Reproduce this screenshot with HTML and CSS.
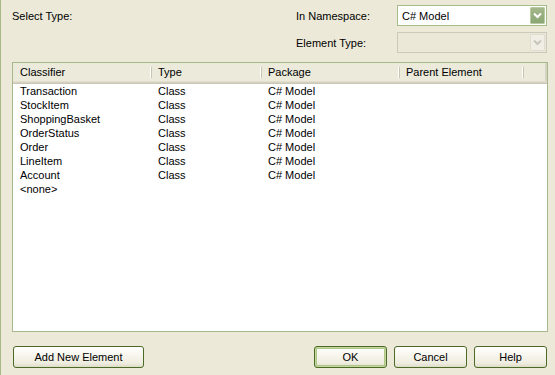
FILE: index.html
```html
<!DOCTYPE html>
<html>
<head>
<meta charset="utf-8">
<link rel="stylesheet" href="styles.css">
</head>
<body>
<div class="dialog">
  <div class="top">
    <div class="select-label">Select Type:</div>
    <div class="fields">
      <div class="field-label">In Namespace:</div>
      <div class="combo">
        <span class="combo-text">C# Model</span>
        <span class="combo-btn">
          <svg width="9" height="7" viewBox="0 0 9 7"><path d="M1 1.5 L4.5 5 L8 1.5" fill="none" stroke="#fff" stroke-width="2"/></svg>
        </span>
      </div>
      <div class="field-label">Element Type:</div>
      <div class="combo disabled">
        <span class="combo-text"></span>
        <span class="combo-btn">
          <svg width="9" height="7" viewBox="0 0 9 7"><path d="M1 1.5 L4.5 5 L8 1.5" fill="none" stroke="#c9c7ba" stroke-width="2"/></svg>
        </span>
      </div>
    </div>
  </div>

  <div class="list">
    <div class="header">
      <div class="hcell c1">Classifier</div>
      <div class="hcell c2">Type</div>
      <div class="hcell c3">Package</div>
      <div class="hcell c4">Parent Element</div>
      <div class="hcell c5"></div>
    </div>
    <div class="rows">
      <div class="row"><span class="c1">Transaction</span><span class="c2">Class</span><span class="c3">C# Model</span></div>
      <div class="row"><span class="c1">StockItem</span><span class="c2">Class</span><span class="c3">C# Model</span></div>
      <div class="row"><span class="c1">ShoppingBasket</span><span class="c2">Class</span><span class="c3">C# Model</span></div>
      <div class="row"><span class="c1">OrderStatus</span><span class="c2">Class</span><span class="c3">C# Model</span></div>
      <div class="row"><span class="c1">Order</span><span class="c2">Class</span><span class="c3">C# Model</span></div>
      <div class="row"><span class="c1">LineItem</span><span class="c2">Class</span><span class="c3">C# Model</span></div>
      <div class="row"><span class="c1">Account</span><span class="c2">Class</span><span class="c3">C# Model</span></div>
      <div class="row"><span class="c1">&lt;none&gt;</span></div>
    </div>
  </div>

  <div class="buttons">
    <button class="btn wide">Add New Element</button>
    <div class="spacer"></div>
    <button class="btn default">OK</button>
    <button class="btn">Cancel</button>
    <button class="btn">Help</button>
  </div>
</div>
</body>
</html>
```

FILE: styles.css
```css
html, body {
  margin: 0;
  padding: 0;
  background: #ece9d8;
}
body {
  width: 555px;
  height: 375px;
  overflow: hidden;
  font-family: "Liberation Sans", Arial, sans-serif;
  font-size: 11px;
  color: #000;
}
.dialog {
  box-sizing: border-box;
  width: 555px;
  height: 375px;
  border-left: 1px solid #a5b98a;
  padding: 5px 8px 0 11px;
  display: flex;
  flex-direction: column;
}
.top {
  display: flex;
  height: 48px;
}
.select-label {
  width: 284px;
  padding-top: 5px;
  line-height: 13px;
}
.fields {
  display: grid;
  grid-template-columns: 101px 150px;
  grid-template-rows: 21px 21px;
  row-gap: 6px;
  align-items: center;
}
.field-label {
  line-height: 13px;
  padding-top: 2px;
  color: #000;
}
.combo {
  box-sizing: border-box;
  height: 21px;
  border: 1px solid #a5bc8b;
  background: #fff;
  display: flex;
  align-items: center;
  justify-content: space-between;
  padding: 0 1px 0 4px;
}
.combo-text {
  line-height: 13px;
  padding-top: 1px;
}
.combo-btn {
  box-sizing: border-box;
  width: 15px;
  height: 17px;
  border: 1px solid #b9c9a3;
  border-radius: 1px;
  background: linear-gradient(#a3b78b, #8ba673);
  display: flex;
  align-items: center;
  justify-content: center;
}
.combo.disabled {
  border-color: #cbc9bb;
  background: #ebe8d7;
}
.combo.disabled .combo-btn {
  border-color: #e0ddd0;
  background: #f1efe5;
}
.list {
  box-sizing: border-box;
  margin-top: 9px;
  width: 536px;
  height: 270px;
  border: 1px solid #a5b98a;
  background: #fff;
  display: flex;
  flex-direction: column;
}
.header {
  box-sizing: border-box;
  height: 21px;
  display: flex;
  background: #ebeadb;
  box-shadow: inset 0 -1px 0 #cbc7b8, inset 0 -2px 0 #d6d2c2, inset 0 -3px 0 #e2decd;
  flex-shrink: 0;
}
.hcell {
  box-sizing: border-box;
  height: 18px;
  line-height: 18px;
  padding-left: 7px;
  position: relative;
}
.hcell.c1, .hcell.c2, .hcell.c3, .hcell.c4 {
  background: linear-gradient(#c7c5b2, #c7c5b2) right 4px / 1px 11px no-repeat,
              linear-gradient(#fff, #fff) calc(100% - 1px) 4px / 1px 11px no-repeat;
}
.hcell.c5 {
  flex: 1;
  border-right: 2px solid #d6d3c5;
}
.c1 { width: 139px; }
.c2 { width: 110px; }
.c3 { width: 138px; }
.c4 { width: 124px; }
.hcell.c2, .hcell.c3, .hcell.c4 { padding-left: 6px; }
.rows {
  padding-top: 0;
}
.row {
  display: flex;
  height: 14px;
  line-height: 14px;
}
.row span {
  box-sizing: border-box;
  padding-left: 7px;
  white-space: nowrap;
}
.row .c2, .row .c3 { padding-left: 6px; }
.buttons {
  display: flex;
  margin-top: 14px;
  gap: 7px;
  padding-left: 1px;
}
.spacer {
  flex: 1;
}
.btn {
  box-sizing: border-box;
  height: 22px;
  width: 73px;
  border: 1px solid #4b6a25;
  border-radius: 3px;
  background: linear-gradient(#ffffff 0%, #f7f6ee 40%, #efede0 80%, #dedbc8 100%);
  font-family: "Liberation Sans", Arial, sans-serif;
  font-size: 11px;
  color: #000;
  padding: 0;
  line-height: 18px;
}
.btn.wide {
  width: 131px;
}
.btn.default {
  box-shadow: inset 0 0 0 1px #c4d5a0, inset 0 0 0 2px #b0c78a;
}
```
